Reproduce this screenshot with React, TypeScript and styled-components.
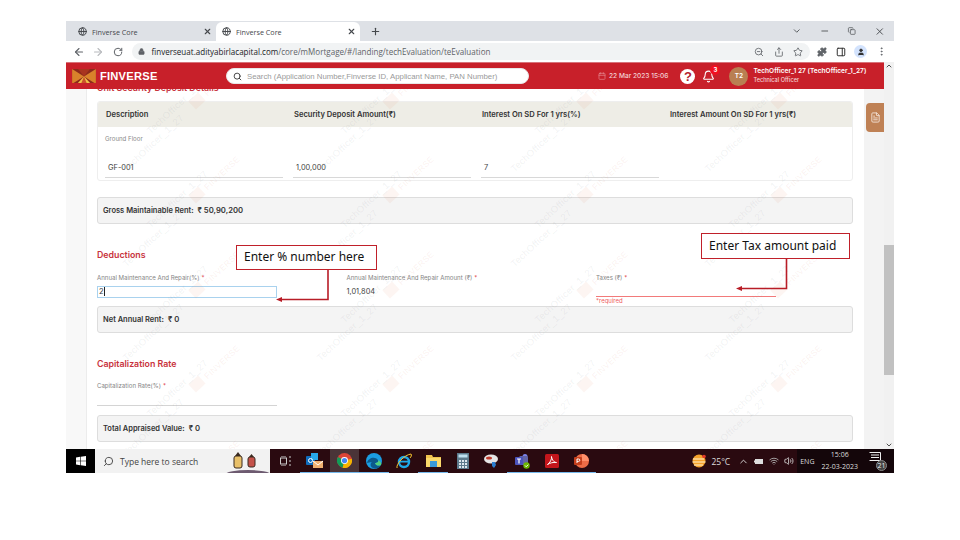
import React from "react";
import styled, { createGlobalStyle } from "styled-components";
import {
  ArrowLeft,
  ArrowRight,
  Bell,
  Calendar,
  ChevronDown,
  ChevronUp,
  Copy,
  FileText,
  Globe,
  Lock,
  Minus,
  MoreVertical,
  PanelRight,
  Plus,
  Puzzle,
  RotateCw,
  Search,
  Share,
  Star,
  User,
  Volume2,
  Wifi,
  X,
  ZoomOut,
} from "lucide-react";

const GlobalStyle = createGlobalStyle`
  html, body { margin: 0; padding: 0; background: #fff; }
  body { width: 960px; height: 540px; overflow: hidden; font-family: "Inter", "Liberation Sans", sans-serif; }
`;

const Slide = styled.div`
  position: relative;
  width: 960px;
  height: 540px;
  padding: 21px 66px 0;
  box-sizing: border-box;
  background: #fff;
`;

const Win = styled.div`
  width: 828px;
  height: 452px;
  display: flex;
  flex-direction: column;
  overflow: hidden;
`;

const TabStrip = styled.div`
  height: 20px;
  flex: none;
  display: flex;
  align-items: flex-end;
  padding-left: 6px;
  background: #dee1e6;
  color: #45484c;
`;

const Tab = styled.div<{ $active?: boolean }>`
  width: 144px;
  height: 19px;
  box-sizing: border-box;
  padding: 0 4px 0 6px;
  display: flex;
  align-items: center;
  gap: 5px;
  font: 7.2px "Open Sans", sans-serif;
  border-radius: 6px 6px 0 0;
  background: ${(p) => (p.$active ? "#fff" : "transparent")};
  span { flex: 1; }
`;

const NewTab = styled.div`
  width: 30px;
  height: 19px;
  display: flex;
  align-items: center;
  justify-content: center;
`;

const WinControls = styled.div`
  margin-left: auto;
  margin-right: 1px;
  height: 20px;
  display: flex;
  align-items: center;
  svg { width: 27.5px; }
`;

const Toolbar = styled.div`
  height: 21px;
  flex: none;
  display: flex;
  align-items: center;
  background: #fff;
  color: #5f6368;
  box-sizing: border-box;
  padding: 0 3px;
`;

const NavBtn = styled.div`
  width: 19.5px;
  display: flex;
  justify-content: center;
`;

const Omnibox = styled.div`
  margin-left: 4px;
  width: 678px;
  height: 17px;
  border-radius: 9px;
  background: #f1f3f4;
  display: flex;
  align-items: center;
  padding: 0 6.5px 0 6px;
  box-sizing: border-box;
  font: 8.05px "Open Sans", sans-serif;
  color: #5f6368;
  b { font-weight: 400; color: #202124; }
`;

const Url = styled.div`
  margin-left: 7px;
  flex: 1;
  white-space: nowrap;
`;

const OmniIcons = styled.div`
  display: flex;
  gap: 9.5px;
  color: #5f6368;
`;

const Extensions = styled.div`
  display: flex;
  align-items: center;
  gap: 8.5px;
  margin-left: 7.5px;
`;

const ProfileDot = styled.div`
  width: 13px;
  height: 13px;
  border-radius: 50%;
  background: #d3e3fd;
  color: #333;
  display: flex;
  align-items: center;
  justify-content: center;
`;

const Viewport = styled.div`
  flex: 1;
  display: flex;
  min-height: 0;
`;

const AppCol = styled.div`
  flex: 1;
  display: flex;
  flex-direction: column;
  min-width: 0;
`;

const Header = styled.header`
  height: 27px;
  flex: none;
  position: relative;
  z-index: 3;
  display: flex;
  align-items: center;
  background: #c8202a;
  color: #fff;
  padding-left: 6px;
  border-top: 1px solid #d8737a;
  box-sizing: border-box;
`;

const Brand = styled.div`
  width: 154px;
  display: flex;
  align-items: center;
  gap: 4px;
  font: 700 11.2px "Liberation Sans", sans-serif;
  letter-spacing: 0.2px;
`;

const SearchPill = styled.div`
  width: 303px;
  height: 16px;
  border-radius: 8px;
  background: #fff;
  border: 1px solid #e8e8e8;
  box-sizing: border-box;
  display: flex;
  align-items: center;
  gap: 5px;
  padding-left: 6px;
  color: #444;
  font: 7.8px "Liberation Sans", sans-serif;
  span { color: #9a9a9a; }
`;

const DateBox = styled.div`
  margin-left: 69px;
  display: flex;
  align-items: center;
  gap: 3px;
  font: 500 6.6px "Inter", sans-serif;
  color: #f3d2d4;
  svg { color: #e58a8f; }
`;

const HelpBtn = styled.div`
  margin-left: 12px;
  width: 15px;
  height: 15px;
  border-radius: 50%;
  background: #fff;
  color: #b3222c;
  font: 700 13px/15px "Liberation Sans", sans-serif;
  text-align: center;
`;

const BellWrap = styled.div`
  position: relative;
  margin-left: 7px;
  display: flex;
`;

const BellBadge = styled.div`
  position: absolute;
  top: -5px;
  right: -5px;
  width: 10px;
  height: 10px;
  border-radius: 50%;
  background: #f01020;
  font: 700 6px/10px "Inter", sans-serif;
  text-align: center;
`;

const Avatar = styled.div`
  margin-left: 14px;
  width: 19px;
  height: 19px;
  border-radius: 50%;
  background: #b97f52;
  font: 600 6.5px/19px "Inter", sans-serif;
  text-align: center;
`;

const UserInfo = styled.div`
  margin-left: 5px;
  font: 600 6.6px/1 "Inter", sans-serif;
  white-space: nowrap;
  small { display: block; margin-top: 3.5px; font: 500 5.6px/1 "Inter", sans-serif; color: #f4d5d7; }
`;

const ContentRow = styled.div`
  flex: 1;
  display: flex;
  min-height: 0;
`;

const LeftRail = styled.div`
  width: 21px;
  flex: none;
  background: #f8f8f8;
  border-right: 1px solid #ececec;
  box-sizing: border-box;
`;

const Main = styled.main`
  position: relative;
  flex: 1;
  min-width: 0;
  overflow: hidden;
  background: #fff;
  padding: 0 11px 0 10px;
`;

const RightRail = styled.div`
  width: 20px;
  flex: none;
  background: #f3f3f3;
  padding-top: 14px;
  display: flex;
  justify-content: flex-end;
  box-sizing: border-box;
`;

const SideTab = styled.div`
  width: 18px;
  height: 29px;
  border-radius: 4px 0 0 4px;
  background: #bf8155;
  color: #f3e4d9;
  display: flex;
  align-items: center;
  justify-content: center;
`;

const ScrollTrack = styled.div`
  width: 10px;
  flex: none;
  background: #f1f1f1;
  display: flex;
  flex-direction: column;
  align-items: center;
  color: #505050;
`;

const ScrollThumb = styled.div`
  width: 100%;
  height: 130px;
  margin-top: 175px;
  background: #c1c1c1;
`;

const ScrollEnd = styled.div`
  margin-top: auto;
  display: flex;
`;

const SectionTitle = styled.h2<{ $top: number }>`
  margin: ${(p) => p.$top}px 0 0;
  font: 600 8.8px/10px "Inter", sans-serif;
  color: #c8323c;
`;

const Card = styled.section`
  margin-top: 8px;
  height: 80px;
  box-sizing: border-box;
  border: 1px solid #eeeeee;
  border-radius: 3px;
  overflow: hidden;
`;

const CardHead = styled.div`
  height: 25px;
  background: #eeede6;
  display: grid;
  grid-template-columns: repeat(4, 188px);
  align-items: center;
  padding-left: 8px;
  font: 600 7.6px "Inter", sans-serif;
  color: #333;
`;

const FloorLabel = styled.div`
  margin: 7px 0 0 7px;
  font: 400 6.1px/10px "Inter", sans-serif;
  color: #8a8a8a;
`;

const DepositRow = styled.div`
  display: grid;
  grid-template-columns: repeat(3, 178px);
  column-gap: 10px;
  padding-left: 7px;
  margin-top: 15px;
`;

const DepositCell = styled.div`
  height: 18px;
  border-bottom: 1px solid #d8d8d8;
  padding-left: 3px;
  font: 400 7.4px/18px "Inter", sans-serif;
  color: #444;
`;

const SummaryBox = styled.div<{ $top: number }>`
  margin-top: ${(p) => p.$top}px;
  height: 27px;
  box-sizing: border-box;
  border: 1px solid #dddddd;
  border-radius: 3px;
  background: #f4f4f4;
  padding-left: 5px;
  display: flex;
  align-items: center;
  gap: 4px;
  font: 600 7.5px "Inter", sans-serif;
  color: #333;
  b { font-weight: 600; font-size: 7.7px; }
`;

const FieldGrid = styled.div`
  margin-top: 13px;
  height: 25px;
  display: grid;
  grid-template-columns: repeat(3, 180px);
  column-gap: 69.5px;
`;

const Field = styled.div`
  min-width: 0;
`;

const FieldLabel = styled.label`
  display: block;
  font: 400 6.1px/10px "Inter", sans-serif;
  color: #858585;
  white-space: nowrap;
  i { font-style: normal; color: #e0404a; margin-left: 2px; }
`;

const ActiveInput = styled.div`
  margin-top: 3px;
  height: 12px;
  box-sizing: border-box;
  border: 1px solid #a9d2ee;
  font: 400 7.4px/10px "Inter", sans-serif;
  color: #333;
  padding-left: 1px;
  span { border-right: 1px solid #222; padding-right: 0.5px; }
`;

const ValueText = styled.div`
  margin-top: 3px;
  height: 12px;
  font: 400 7.4px/12px "Inter", sans-serif;
  color: #444;
`;

const LineInput = styled.div<{ $error?: boolean; $height: number }>`
  height: ${(p) => p.$height}px;
  box-sizing: border-box;
  border-bottom: 1px solid ${(p) => (p.$error ? "#f27a7a" : "#d4d4d4")};
`;

const ErrorText = styled.div`
  font: 400 6px/8px "Inter", sans-serif;
  color: #ee5a60;
`;

const SingleField = styled.div`
  margin-top: 12px;
  width: 180px;
`;

const WatermarkLayer = styled.div`
  position: absolute;
  left: 38px;
  top: -57.5px;
  display: grid;
  grid-template-columns: repeat(4, 194px);
  grid-auto-rows: 94.5px;
  pointer-events: none;
`;

const WatermarkTile = styled.div`
  position: relative;
`;

const WatermarkText = styled.span<{ $x: number; $y: number; $brand?: boolean }>`
  position: absolute;
  left: ${(p) => p.$x}px;
  top: ${(p) => p.$y}px;
  transform: translate(-50%, -50%) rotate(-43deg);
  white-space: nowrap;
  font: 400 ${(p) => (p.$brand ? 8.5 : 9.5)}px "Liberation Sans", sans-serif;
  letter-spacing: 0.3px;
  color: ${(p) => (p.$brand ? "rgba(214, 120, 90, 0.1)" : "rgba(120, 130, 140, 0.11)")};
`;

const WatermarkMark = styled.span<{ $x: number; $y: number }>`
  position: absolute;
  left: ${(p) => p.$x}px;
  top: ${(p) => p.$y}px;
  width: 13px;
  height: 11px;
  transform: translate(-50%, -50%) rotate(-43deg);
  background: rgba(226, 130, 90, 0.08);
`;

const Taskbar = styled.footer`
  height: 24px;
  flex: none;
  display: flex;
  align-items: stretch;
  background: #2a0a10;
  color: #e8e8e8;
`;

const StartBtn = styled.div`
  width: 29px;
  flex: none;
  background: #000;
  display: flex;
  align-items: center;
  justify-content: center;
`;

const SearchBar = styled.div`
  position: relative;
  width: 175px;
  flex: none;
  background: #f2f2f2;
  display: flex;
  align-items: center;
  gap: 6px;
  padding-left: 8px;
  box-sizing: border-box;
  color: #444;
  font: 8.5px "Open Sans", sans-serif;
  overflow: hidden;
`;

const Lanterns = styled.svg`
  position: absolute;
  right: 0;
  top: 0;
`;

const TaskIcons = styled.div`
  display: flex;
  padding-left: 0.5px;
`;

const TaskIcon = styled.div<{ $open?: boolean; $active?: boolean }>`
  width: 29.6px;
  display: flex;
  align-items: center;
  justify-content: center;
  box-sizing: border-box;
  background: ${(p) => (p.$active ? "#4a3438" : "transparent")};
  border-bottom: 1.5px solid ${(p) => (p.$open ? "#76b9ed" : "transparent")};
`;

const Tray = styled.div`
  margin-left: auto;
  display: flex;
  align-items: center;
  font: 7px "Open Sans", sans-serif;
  color: #ddd;
`;

const Weather = styled.div`
  display: flex;
  align-items: center;
  gap: 5px;
  margin-right: 8px;
  font-size: 8.5px;
`;

const TrayIcons = styled.div`
  display: flex;
  align-items: center;
  gap: 5px;
  margin-right: 3px;
`;

const TrayDark = styled.div`
  height: 100%;
  display: flex;
  align-items: center;
  background: #14060a;
  padding-left: 3px;
`;

const Clock = styled.div`
  margin-left: 7px;
  text-align: center;
  line-height: 12px;
  font-size: 7px;
`;

const Notify = styled.div`
  position: relative;
  margin: 0 9px 0 11px;
  width: 16px;
  height: 18px;
`;

const NotifyCount = styled.span`
  position: absolute;
  right: -2px;
  bottom: -1px;
  width: 11px;
  height: 11px;
  border-radius: 50%;
  background: #444;
  border: 1px solid #888;
  box-sizing: border-box;
  font: 7px/9px "Open Sans", sans-serif;
  text-align: center;
  color: #eee;
`;

const Callout = styled.div<{ $x: number; $y: number; $w: number; $h: number }>`
  position: absolute;
  left: ${(p) => p.$x}px;
  top: ${(p) => p.$y}px;
  width: ${(p) => p.$w}px;
  height: ${(p) => p.$h}px;
  box-sizing: border-box;
  border: 1.6px solid #c0202a;
  background: #fff;
  padding-left: 7px;
  font: 12px/${(p) => p.$h - 3}px "Noto Sans", sans-serif;
  color: #111;
  z-index: 5;
`;

const Arrows = styled.svg`
  position: absolute;
  left: 0;
  top: 0;
  z-index: 4;
  pointer-events: none;
`;

function BirlaLogo({ size = 24 }: { size?: number }) {
  return (
    <svg width={size} height={size * 0.62} viewBox="0 0 24 15">
      <rect width="24" height="15" fill="#8c2a1c" />
      <path d="M0 0L12 7.5L0 15Z" fill="#d9822b" />
      <path d="M24 0L12 7.5L24 15Z" fill="#d9822b" />
      <path d="M6 0H18L12 7.5Z" fill="#a8341f" />
      <path d="M12 7.5L5 15H19Z" fill="#f0c14a" />
      <path d="M12 7.5L9 15H15Z" fill="#c9522a" />
    </svg>
  );
}

function Watermarks() {
  return (
    <WatermarkLayer>
      {Array.from({ length: 20 }).map((_, i) => (
        <WatermarkTile key={i}>
          <WatermarkText $x={28} $y={17}>TechOfficer_1_27</WatermarkText>
          <WatermarkText $x={52} $y={73}>TechOfficer_1_27</WatermarkText>
          <WatermarkMark $x={72} $y={69} />
          <WatermarkText $x={97} $y={47} $brand>FINVERSE</WatermarkText>
        </WatermarkTile>
      ))}
    </WatermarkLayer>
  );
}

function ChromeIcon() {
  return (
    <svg width="15" height="15" viewBox="0 0 16 16">
      <circle cx="8" cy="8" r="8" fill="#db4437" />
      <path d="M8 8L1 4.2A8 8 0 0 0 6 15.8Z" fill="#0f9d58" />
      <path d="M8 8L15.8 6A8 8 0 0 1 6 15.8Z" fill="#f4b400" />
      <circle cx="8" cy="8" r="3.7" fill="#fff" />
      <circle cx="8" cy="8" r="2.8" fill="#4285f4" />
    </svg>
  );
}

function TaskbarApps() {
  return (
    <TaskIcons>
      <TaskIcon>
        <svg width="11" height="10" viewBox="0 0 11 10" fill="none" stroke="#ccc">
          <rect x="0.5" y="2" width="6" height="6" />
          <path d="M9 1h2M9 5h2M9 9h2M1 0h5M1 10h5" />
        </svg>
      </TaskIcon>
      <TaskIcon $open>
        <svg width="17" height="16" viewBox="0 0 17 16">
          <rect x="0" y="3" width="9" height="9" rx="1" fill="#0f6cbd" />
          <rect x="5" y="0" width="7" height="7" fill="#28a8ea" />
          <rect x="7" y="8" width="10" height="7" fill="#f0b070" />
          <path d="M7 8l5 4 5-4" fill="none" stroke="#fff" />
          <circle cx="4.5" cy="7.5" r="2" fill="none" stroke="#fff" />
        </svg>
      </TaskIcon>
      <TaskIcon $open $active>
        <ChromeIcon />
      </TaskIcon>
      <TaskIcon $open>
        <svg width="16" height="16" viewBox="0 0 16 16">
          <circle cx="8" cy="8" r="8" fill="#1b9de2" />
          <path d="M1 10C2 5 9 3 12 7c1 2-1 3-3 3 1 3 4 3 6 2-2 4-6 4-8 3-3-1-3-5-1-6-2 0-4 1-5 1Z" fill="#0c5a8c" />
          <path d="M9 10c2 0 4-1 3-3 2 1 4 3 3 5-2 1-5 1-6-2Z" fill="#52d17c" />
        </svg>
      </TaskIcon>
      <TaskIcon>
        <svg width="16" height="16" viewBox="0 0 16 16" fill="none">
          <circle cx="8" cy="9" r="5" stroke="#1ea7e8" strokeWidth="2.4" />
          <path d="M4 8.6H13" stroke="#1ea7e8" strokeWidth="1.8" />
          <path d="M1 15C0 11 8 2 15 1c1 1 0 3-1 4" stroke="#f4c430" strokeWidth="1" />
        </svg>
      </TaskIcon>
      <TaskIcon $open>
        <svg width="15" height="13" viewBox="0 0 15 13">
          <path d="M0 1h6l1 2h8v10H0Z" fill="#f0c34e" />
          <rect y="4" width="15" height="9" fill="#fbd96b" />
          <rect x="4" y="7" width="7" height="6" fill="#3a9ad9" />
        </svg>
      </TaskIcon>
      <TaskIcon>
        <svg width="12" height="16" viewBox="0 0 12 16">
          <rect width="12" height="16" fill="#5d7a8c" />
          <rect x="1.5" y="1.5" width="9" height="3" fill="#bfe0f0" />
          <path d="M2 7h2v2H2zM5 7h2v2H5zM8 7h2v2H8zM2 10h2v2H2zM5 10h2v2H5zM8 10h2v2H8zM2 13h2v2H2zM5 13h2v2H5zM8 13h2v2H8z" fill="#dfe8ee" />
        </svg>
      </TaskIcon>
      <TaskIcon>
        <svg width="16" height="16" viewBox="0 0 16 16">
          <ellipse cx="7" cy="6" rx="7" ry="4.5" fill="#e6e6e6" />
          <ellipse cx="5" cy="5" rx="3" ry="1.6" fill="#c0392b" />
          <path d="M8 9l3 0 1 3-2 3-2-2Z" fill="#2a7fd0" />
        </svg>
      </TaskIcon>
      <TaskIcon $open>
        <svg width="16" height="16" viewBox="0 0 16 16">
          <circle cx="11" cy="3.5" r="2.5" fill="#7b83eb" />
          <rect x="5" y="3" width="9" height="9" rx="1.5" fill="#6264a7" />
          <rect x="1" y="4" width="8" height="8" rx="1" fill="#4b53bc" />
          <path d="M3 6h4M5 6v4.5" stroke="#fff" strokeWidth="1.2" />
          <circle cx="12.5" cy="12.5" r="3.2" fill="#6bb700" />
          <path d="M11 12.5l1.2 1.2 2-2" stroke="#fff" fill="none" />
        </svg>
      </TaskIcon>
      <TaskIcon $open>
        <svg width="14" height="14" viewBox="0 0 14 14">
          <rect width="14" height="14" rx="1.5" fill="#c4161c" />
          <path d="M2.5 10.5C5 9 7 5 6.5 2.5 7 6 9 8.5 11.5 8.5 8 8 5 9 2.5 10.5Z" fill="none" stroke="#fff" />
        </svg>
      </TaskIcon>
      <TaskIcon $open>
        <svg width="16" height="16" viewBox="0 0 16 16">
          <circle cx="9" cy="8" r="7" fill="#ed6c47" />
          <path d="M9 1a7 7 0 0 1 7 7H9Z" fill="#ff8f6b" />
          <rect x="1" y="4" width="8" height="8" rx="1" fill="#c43e1c" />
          <path d="M4 10V6h1.6a1.2 1.2 0 0 1 0 2.4H4" stroke="#fff" fill="none" />
        </svg>
      </TaskIcon>
    </TaskIcons>
  );
}

export default function App() {
  return (
    <>
      <GlobalStyle />
      <Slide>
        <Win>
          <TabStrip>
            <Tab>
              <Globe size={9} strokeWidth={2.6} />
              <span>Finverse Core</span>
              <X size={9} strokeWidth={3} />
            </Tab>
            <Tab $active>
              <Globe size={9} strokeWidth={2.6} />
              <span>Finverse Core</span>
              <X size={9} strokeWidth={3} />
            </Tab>
            <NewTab>
              <Plus size={11} strokeWidth={2.5} />
            </NewTab>
            <WinControls>
              <ChevronDown size={10} />
              <Minus size={10} />
              <Copy size={8} />
              <X size={11} />
            </WinControls>
          </TabStrip>
          <Toolbar>
            <NavBtn>
              <ArrowLeft size={12} strokeWidth={2.2} />
            </NavBtn>
            <NavBtn>
              <ArrowRight size={12} color="#b8babd" strokeWidth={2.2} />
            </NavBtn>
            <NavBtn>
              <RotateCw size={10} strokeWidth={2.4} />
            </NavBtn>
            <Omnibox>
              <Lock size={7} fill="#5f6368" />
              <Url>
                <b>finverseuat.adityabirlacapital.com</b>/core/mMortgage/#/landing/techEvaluation/teEvaluation
              </Url>
              <OmniIcons>
                <ZoomOut size={10} />
                <Share size={10} />
                <Star size={10} />
              </OmniIcons>
            </Omnibox>
            <Extensions>
              <Puzzle size={10} fill="#5f6368" />
              <PanelRight size={10} strokeWidth={2.4} color="#333" />
              <ProfileDot>
                <User size={8} fill="#333" />
              </ProfileDot>
              <MoreVertical size={11} />
            </Extensions>
          </Toolbar>
          <Viewport>
            <AppCol>
              <Header>
                <Brand>
                  <BirlaLogo />
                  FINVERSE
                </Brand>
                <SearchPill>
                  <Search size={9} strokeWidth={2.6} />
                  <span>Search (Application Number,Finverse ID, Applicant Name, PAN Number)</span>
                </SearchPill>
                <DateBox>
                  <Calendar size={8} />
                  22 Mar 2023 15:06
                </DateBox>
                <HelpBtn>?</HelpBtn>
                <BellWrap>
                  <Bell size={13} />
                  <BellBadge>3</BellBadge>
                </BellWrap>
                <Avatar>T2</Avatar>
                <UserInfo>
                  TechOfficer_1 27 (TechOfficer_1_27)
                  <small>Technical Officer</small>
                </UserInfo>
              </Header>
              <ContentRow>
                <LeftRail />
                <Main>
                  <SectionTitle $top={-6}>Unit Security Deposit Details</SectionTitle>
                  <Card>
                    <CardHead>
                      <div>Description</div>
                      <div>Security Deposit Amount(₹)</div>
                      <div>Interest On SD For 1 yrs(%)</div>
                      <div>Interest Amount On SD For 1 yrs(₹)</div>
                    </CardHead>
                    <FloorLabel>Ground Floor</FloorLabel>
                    <DepositRow>
                      <DepositCell>GF-001</DepositCell>
                      <DepositCell>1,00,000</DepositCell>
                      <DepositCell>7</DepositCell>
                    </DepositRow>
                  </Card>
                  <SummaryBox $top={16}>
                    Gross Maintainable Rent: <b>₹ 50,90,200</b>
                  </SummaryBox>
                  <SectionTitle $top={26}>Deductions</SectionTitle>
                  <FieldGrid>
                    <Field>
                      <FieldLabel>
                        Annual Maintenance And Repair(%)<i>*</i>
                      </FieldLabel>
                      <ActiveInput>
                        <span>2</span>
                      </ActiveInput>
                    </Field>
                    <Field>
                      <FieldLabel>
                        Annual Maintenance And Repair Amount (₹)<i>*</i>
                      </FieldLabel>
                      <ValueText>1,01,804</ValueText>
                    </Field>
                    <Field>
                      <FieldLabel>
                        Taxes (₹)<i>*</i>
                      </FieldLabel>
                      <LineInput $error $height={14} />
                      <ErrorText>*required</ErrorText>
                    </Field>
                  </FieldGrid>
                  <SummaryBox $top={8}>
                    Net Annual Rent: <b>₹ 0</b>
                  </SummaryBox>
                  <SectionTitle $top={26}>Capitalization Rate</SectionTitle>
                  <SingleField>
                    <FieldLabel>
                      Capitalization Rate(%)<i>*</i>
                    </FieldLabel>
                    <LineInput $height={15} />
                  </SingleField>
                  <SummaryBox $top={9}>
                    Total Appraised Value: <b>₹ 0</b>
                  </SummaryBox>
                  <Watermarks />
                </Main>
                <RightRail>
                  <SideTab>
                    <FileText size={11} />
                  </SideTab>
                </RightRail>
              </ContentRow>
            </AppCol>
            <ScrollTrack>
              <ChevronUp size={8} strokeWidth={3} />
              <ScrollThumb />
              <ScrollEnd>
                <ChevronDown size={8} strokeWidth={3} />
              </ScrollEnd>
            </ScrollTrack>
          </Viewport>
          <Taskbar>
            <StartBtn>
              <svg width="10" height="10" viewBox="0 0 10 10" fill="#fff">
                <path d="M0 1.4L4.2.8V4.7H0ZM4.8.7L10 0V4.7H4.8ZM0 5.3H4.2V9.2L0 8.6ZM4.8 5.3H10V10L4.8 9.3Z" />
              </svg>
            </StartBtn>
            <SearchBar>
              <Search size={11} style={{ transform: "scaleX(-1)" }} />
              Type here to search
              <Lanterns width="50" height="24" viewBox="0 0 50 24">
                <ellipse cx="28" cy="25" rx="22" ry="4" fill="#6d5a70" />
                <rect x="14" y="7" width="8" height="12" rx="2" fill="#e8c069" stroke="#3a2a20" />
                <path d="M15 7l3-4 3 4Z" fill="#3a2a20" />
                <rect x="28" y="8" width="7" height="10" rx="2" fill="#c4524a" stroke="#3a2a20" />
                <path d="M29 8l2.5-3L34 8Z" fill="#3a2a20" />
              </Lanterns>
            </SearchBar>
            <TaskbarApps />
            <Tray>
              <Weather>
                <svg width="15" height="14" viewBox="0 0 15 14">
                  <circle cx="7" cy="7" r="6.5" fill="#f4a22c" />
                  <circle cx="12" cy="2.5" r="1.8" fill="#e23a2a" />
                  <path d="M1 5h11M0.5 8h13M2 11h9" stroke="#fff2d0" />
                </svg>
                25°C
              </Weather>
              <TrayIcons>
                <ChevronUp size={11} />
                <svg width="10" height="7" viewBox="0 0 10 7" fill="#ddd">
                  <rect x="1" y="1" width="8" height="5" />
                  <rect y="2.5" width="1" height="2" />
                </svg>
                <Wifi size={10} color="#bbb" />
                <Volume2 size={10} />
              </TrayIcons>
              <TrayDark>
                ENG
                <Clock>
                  15:06
                  <br />
                  22-03-2023
                </Clock>
                <Notify>
                  <svg width="12" height="11" viewBox="0 0 12 11" fill="none" stroke="#eee">
                    <path d="M.5.5h11v8H.5M2 3h8M2 5.5h8" />
                  </svg>
                  <NotifyCount>21</NotifyCount>
                </Notify>
              </TrayDark>
            </Tray>
          </Taskbar>
        </Win>
        <Arrows width="960" height="540" viewBox="0 0 960 540" fill="none">
          <path d="M328 270V299.5H281" stroke="#b81d27" strokeWidth="1.6" />
          <path d="M276 299.5L282 297V302Z" fill="#b81d27" />
          <path d="M786.5 259V288.5H741" stroke="#b81d27" strokeWidth="1.6" />
          <path d="M736 288.5L742 286V291Z" fill="#b81d27" />
        </Arrows>
        <Callout $x={236} $y={245} $w={141} $h={25}>Enter % number here</Callout>
        <Callout $x={701} $y={233} $w={149} $h={26}>Enter Tax amount paid</Callout>
      </Slide>
    </>
  );
}
